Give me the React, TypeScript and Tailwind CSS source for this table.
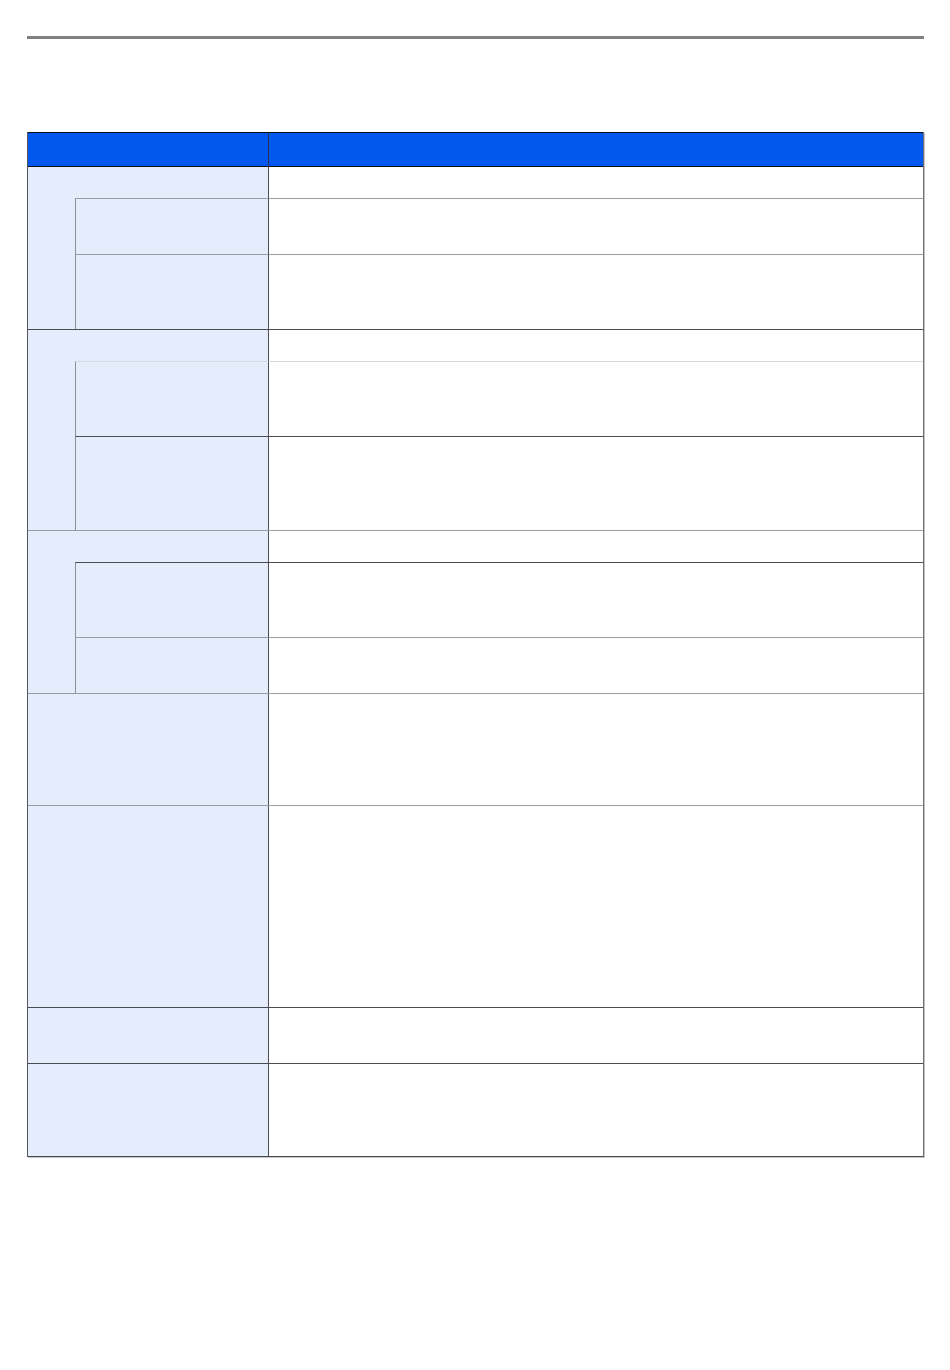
import React from "react";

function SubRow({ h, top }: { h: string; top: string }) {
  return (
    <div className={`flex ${h}`}>
      <div className={`w-[194px] border-l border-l-[#8c8f9c] border-t ${top} border-r border-r-[#4b4b52] bg-[#e5ecfb]`} />
      <div className={`flex-1 border-t ${top} bg-white`} />
    </div>
  );
}

function Group({
  top,
  subs,
}: {
  top: string;
  subs: { h: string; top: string }[];
}) {
  return (
    <div className={`border-t ${top}`}>
      <div className="flex h-[31px]">
        <div className="w-[241px] border-r border-r-[#4b4b52] bg-[#e5ecfb]" />
        <div className="flex-1 bg-white" />
      </div>
      <div className="flex">
        <div className="w-[47px] bg-[#e5ecfb]" />
        <div className="flex flex-1 flex-col">
          {subs.map((s, i) => (
            <SubRow key={i} h={s.h} top={s.top} />
          ))}
        </div>
      </div>
    </div>
  );
}

function Row({ h, top }: { h: string; top: string }) {
  return (
    <div className={`flex ${h} border-t ${top}`}>
      <div className="w-[241px] border-r border-r-[#4b4b52] bg-[#e5ecfb]" />
      <div className="flex-1 bg-white" />
    </div>
  );
}

export default function App() {
  return (
    <div className="min-h-[1370px] w-[950px] bg-white" style={{ fontFamily: '"Liberation Sans", Arial, sans-serif' }}>
      <div className="pt-[36px] pl-[27px]">
        <div className="h-[3px] w-[897px] bg-[#808080]" />
      </div>
      <div className="ml-[27px] mt-[93px] w-[897px] border-l border-r border-b border-l-[#55555c] border-r-[#6e6e74] border-b-[#4b4b52] shadow-[1px_1px_0_#c4c4c4]">
        <div className="flex h-[35px] border-t border-b border-t-[#111] border-b-[#111] bg-[#0058ee]">
          <div className="w-[241px] border-r border-r-[#2a2f4a]" />
          <div className="flex-1" />
        </div>
        <div className="-mt-px">
          <Group
            top="border-t-[#111]"
            subs={[
              { h: "h-[56px]", top: "border-t-[#9a9ca4]" },
              { h: "h-[75px]", top: "border-t-[#9a9ca4]" },
            ]}
          />
        </div>
        <Group
          top="border-t-[#4b4b52]"
          subs={[
            { h: "h-[75px]", top: "border-t-[#d6d9e2]" },
            { h: "h-[94px]", top: "border-t-[#4b4b52]" },
          ]}
        />
        <Group
          top="border-t-[#9a9ca4]"
          subs={[
            { h: "h-[75px]", top: "border-t-[#4b4b52]" },
            { h: "h-[56px]", top: "border-t-[#9a9ca4]" },
          ]}
        />
        <Row h="h-[112px]" top="border-t-[#9a9ca4]" />
        <Row h="h-[202px]" top="border-t-[#9a9ca4]" />
        <Row h="h-[56px]" top="border-t-[#4b4b52]" />
        <Row h="h-[93px]" top="border-t-[#4b4b52]" />
      </div>
    </div>
  );
}
